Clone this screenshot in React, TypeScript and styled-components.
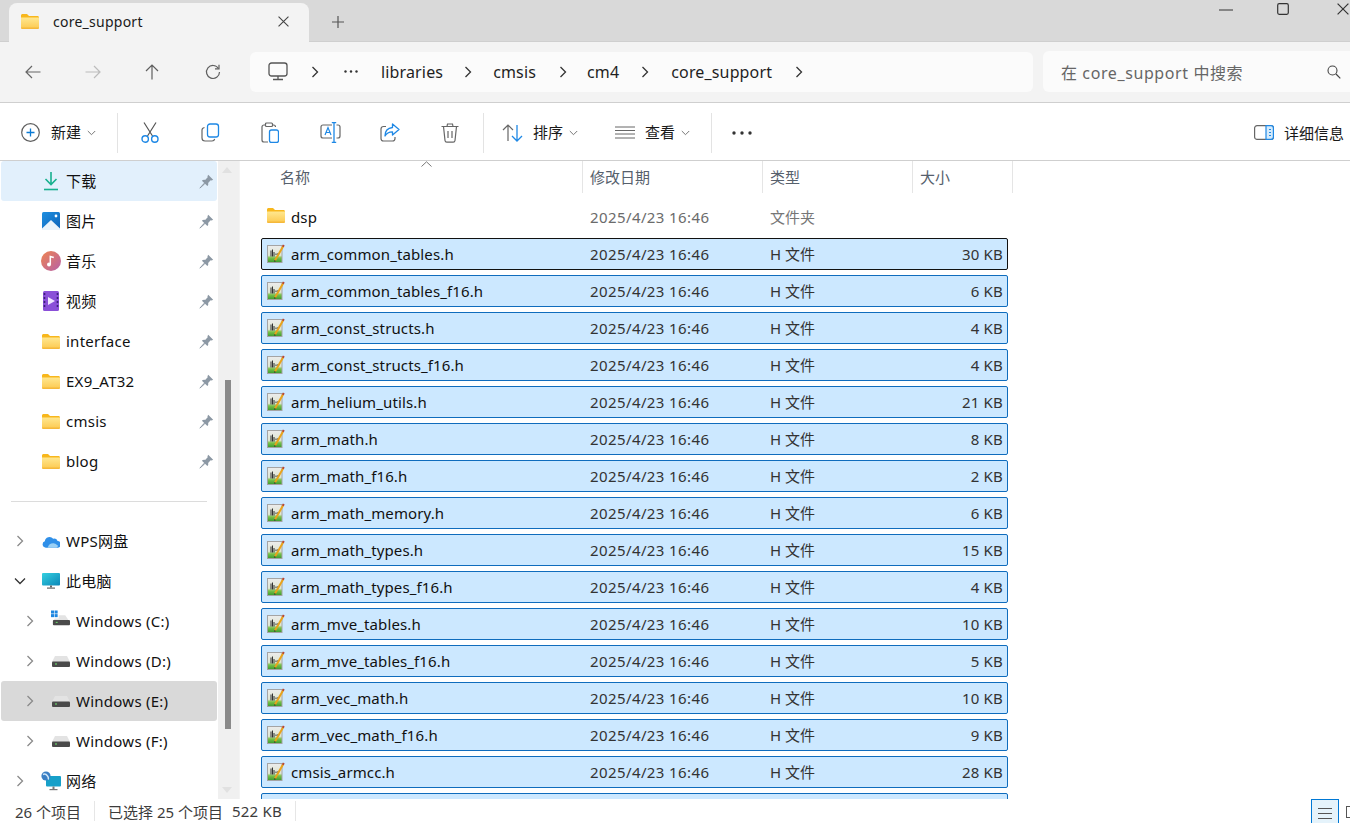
import React from "react";
import styled, { createGlobalStyle } from "styled-components";

const Global = createGlobalStyle`
  html, body { margin: 0; padding: 0; width: 1350px; height: 823px; overflow: hidden; background: #fff; }
  * { box-sizing: border-box; }
  body { font-family: "Noto Sans", "Noto Sans CJK SC", sans-serif; color: #1a1a1a; }
`;

const Page = styled.div`
  width: 1350px; height: 823px; display: flex; flex-direction: column; overflow: hidden;
`;
const TitleBar = styled.div`
  height: 42px; flex: none; background: #d9d9d9; border-bottom: 1px solid #cfcfcf;
  display: flex; align-items: flex-end; padding-left: 9px; position: relative;
`;
const Tab = styled.div`
  width: 300px; height: 39px; margin-bottom: -1px; background: #f3f3f3; border-radius: 8px 8px 0 0;
  display: flex; align-items: center; padding: 0 20px 2px 12px; font-size: 14px; letter-spacing: 0.25px;
`;
const TabTitle = styled.span`
  margin-left: 14px; flex: 1; color: #1a1a1a; line-height: 1;
`;
const NewTab = styled.div`
  margin-left: 23px; height: 38px; display: flex; align-items: center; color: #555;
`;
const WindowControls = styled.div`
  position: absolute; top: 3px; right: 1px; display: flex; align-items: flex-start;
`;
const WinSlot = styled.div<{ $gap?: number }>`
  margin-right: ${(p) => p.$gap ?? 0}px; display: flex;
`;
const NavBar = styled.div`
  height: 61px; flex: none; background: #f3f3f3; border-bottom: 1px solid #cfcfcf;
  display: flex; align-items: center; padding-left: 22px; padding-bottom: 1px;
`;
const NavBtn = styled.div`
  width: 60px; height: 24px; flex: none; display: flex; align-items: center; padding-left: 3px;
`;
const Address = styled.div`
  margin-left: -12px; width: 783px; height: 40px; background: #fbfbfb; border-radius: 6px;
  display: flex; align-items: center; padding-left: 18px; font-size: 16px; letter-spacing: 0.15px; color: #1f1f1f; flex: none;
`;
const Crumb = styled.span<{ $gap: number }>`
  margin-right: ${(p) => p.$gap}px; display: flex; align-items: center; line-height: 1; white-space: nowrap;
`;
const SearchBox = styled.div`
  margin-left: 10px; flex: 1; height: 41px; background: #fbfbfb; border-radius: 6px 0 0 6px;
  display: flex; align-items: center; justify-content: space-between; padding: 0 9px 0 18px;
  font-size: 16px; letter-spacing: 0.6px; color: #666;
`;
const CommandBar = styled.div`
  height: 58px; flex: none; background: #fff; border-bottom: 1px solid #cfcfcf; padding-top: 2px;
  display: flex; align-items: center; font-size: 15px; color: #1a1a1a;
`;
const NewButton = styled.div`
  width: 117px; flex: none; display: flex; align-items: center; padding-left: 21px;
`;
const CmdLabel = styled.span<{ $left: number }>`
  margin-left: ${(p) => p.$left}px; line-height: 1;
`;
const Caret = styled.span<{ $left: number }>`
  margin-left: ${(p) => p.$left}px; display: flex;
`;
const CmdSep = styled.div<{ $left?: number }>`
  width: 1px; height: 40px; background: #e3e3e3; flex: none; margin-left: ${(p) => p.$left ?? 0}px;
`;
const IconBtn = styled.div`
  width: 60px; flex: none; display: flex; justify-content: center; align-items: center;
`;
const IconRow = styled.div`
  display: flex; margin-left: 2px;
`;
const TextBtn = styled.div<{ $left: number }>`
  display: flex; align-items: center; margin-left: ${(p) => p.$left}px; flex: none;
`;
const Details = styled.div`
  margin-left: auto; padding-right: 6px; display: flex; align-items: center; gap: 10px;
`;
const Main = styled.div`
  flex: 1; min-height: 0; display: flex;
`;
const Sidebar = styled.div`
  width: 218px; flex: none; overflow: hidden; font-size: 15px; letter-spacing: 0.25px; padding-left: 1px;
`;
const NavRow = styled.div<{ $level: number; $tone?: "blue" | "gray" }>`
  height: 40px; width: 216px; display: flex; align-items: center; border-radius: 3px;
  padding-left: ${(p) => 10 + (p.$level - 1) * 10}px; padding-right: 3px;
  background: ${(p) => (p.$tone === "blue" ? "#e2f0fc" : p.$tone === "gray" ? "#d9d9d9" : "transparent")};
  color: #111;
`;
const ChevSlot = styled.div`
  width: 18px; flex: none; display: flex; justify-content: center; margin-right: 13px;
`;
const NavIcon = styled.div`
  width: 18px; height: 20px; flex: none; display: flex; align-items: center; justify-content: center;
`;
const NavText = styled.span`
  margin-left: 6px; flex: 1; white-space: nowrap; line-height: 1;
`;
const NavDivider = styled.div`
  height: 1px; background: #dcdcdc; margin: 20px 10px 19px 10px; width: 196px;
`;
const ScrollTrack = styled.div`
  width: 21px; flex: none; background: #f0f0f0; position: relative; display: flex; flex-direction: column; align-items: center;
`;
const ScrollArrow = styled.div<{ $down?: boolean }>`
  position: absolute; left: 4px; ${(p) => (p.$down ? "bottom: 6px;" : "top: 6px;")}
  width: 0; height: 0; border-left: 5px solid transparent; border-right: 5px solid transparent;
  ${(p) => (p.$down ? "border-top: 6px solid #e1e1e1;" : "border-bottom: 6px solid #e1e1e1;")}
`;
const ScrollThumb = styled.div`
  position: absolute; left: 7px; top: 219px; width: 6px; height: 349px; background: #8a8a8a;
`;
const FileArea = styled.div`
  flex: 1; min-width: 0; overflow: hidden; border-left: 1px solid #f4f4f4; position: relative; padding-left: 21px;
`;
const HeaderRow = styled.div`
  height: 32px; display: flex; font-size: 15px; color: #56606c; width: 752px;
`;
const HeaderCell = styled.div<{ $w: number; $first?: boolean }>`
  width: ${(p) => p.$w}px; flex: none; padding-left: ${(p) => (p.$first ? 19 : 7)}px;
  border-right: 1px solid #e5e5e5; display: flex; align-items: center; padding-bottom: 2px;
`;
const SortCaret = styled.div`
  position: absolute; left: 181px; top: 0; display: flex;
`;
const Rows = styled.div`
  padding-top: 8px; display: flex; flex-direction: column; gap: 5px;
`;
const FileRow = styled.div<{ $state?: "none" | "sel" | "focus" }>`
  width: 747px; height: 32px; flex: none; display: flex; align-items: center; border-radius: 2px; font-size: 15px;
  border: 1px solid ${(p) => (p.$state === "focus" ? "#111" : p.$state === "sel" ? "#0f6cbd" : "transparent")};
  background: ${(p) => (p.$state === "none" ? "transparent" : "#cce8ff")};
`;
const FileIcon = styled.div`
  width: 18px; height: 18px; margin-left: 5px; flex: none; display: flex;
`;
const FileName = styled.span`
  margin-left: 6px; width: 299px; flex: none; white-space: nowrap; color: #111; line-height: 1; letter-spacing: 0.12px;
`;
const FileDate = styled.span<{ $muted?: boolean }>`
  width: 180px; flex: none; color: ${(p) => (p.$muted ? "#6b6b6b" : "#333")}; line-height: 1; letter-spacing: 0.4px;
`;
const FileType = styled.span<{ $muted?: boolean }>`
  width: 90px; flex: none; color: ${(p) => (p.$muted ? "#767676" : "#333")}; line-height: 1;
`;
const FileSize = styled.span`
  flex: 1; text-align: right; padding-right: 4px; color: #333; line-height: 1; letter-spacing: 0.2px;
`;
const StatusBar = styled.div`
  height: 24px; flex: none; background: #fff; display: flex; align-items: center; font-size: 15px;
  color: #3c3c3c; padding-left: 15px; position: relative;
`;
const StatusSep = styled.div`
  width: 1px; height: 20px; background: #e6e6e6; margin: 0 13px 0 13px;
`;
const StatusSize = styled.span`
  margin-left: 9px; letter-spacing: 0.2px;
`;
const ViewToggle = styled.div`
  position: absolute; left: 1311px; top: 0; width: 28px; height: 30px;
  background: #e5f3fb; border: 1px solid #0078d4; display: flex; flex-direction: column; gap: 4px;
  padding: 8px 6px 0;
`;
const ToggleLine = styled.div`
  height: 1px; background: #555;
`;
const ToggleOther = styled.div`
  position: absolute; left: 1346px; top: 7px; width: 10px; height: 12px; border: 1px solid #555;
`;

/* ---------- icons ---------- */
const Folder = () => (
  <svg width="18" height="15" viewBox="0 0 18 15">
    <defs>
      <linearGradient id="fg" x1="0" y1="0" x2="0" y2="1">
        <stop offset="0" stopColor="#ffe78f" />
        <stop offset="1" stopColor="#fcc94f" />
      </linearGradient>
    </defs>
    <path d="M0 1.500C0 .7.7 0 1.500 0H6l2 2h8.500c.8 0 1.500.7 1.500 1.500V5H0z" fill="#f8b71c" />
    <path d="M0 3.500h18V13.500c0 .8-.7 1.500-1.500 1.500h-15C.7 15 0 14.300 0 13.500z" fill="url(#fg)" />
    <path d="M0 13.500h18v.3c0 .7-.5 1.200-1.200 1.200H1.200C.5 15 0 14.500 0 13.800z" fill="#f5b83a" />
  </svg>
);
const HFile = () => (
  <svg width="18" height="19" viewBox="0 0 18 19" style={{ marginTop: -1 }}>
    <defs>
      <linearGradient id="hg" x1="0" y1="0" x2="0" y2="1">
        <stop offset="0" stopColor="#ececec" />
        <stop offset="0.58" stopColor="#dfe6d2" />
        <stop offset="0.72" stopColor="#7cc24c" />
        <stop offset="1" stopColor="#379a2b" />
      </linearGradient>
    </defs>
    <rect x="0.500" y="1.500" width="14.500" height="17" fill="url(#hg)" stroke="#a4a4a4" />
    <path d="M4 6.500v6M5.500 5.500v7M7 8v4.500M9 9.500v1.500M10.500 9.500v1" stroke="#333" strokeWidth="1" />
    <path d="M8 16.500 16.300 2" stroke="#e8a31c" strokeWidth="2" />
    <path d="M15.800 2.800 16.800 1" stroke="#b5473a" strokeWidth="2" />
    <path d="M7.200 18l.3-2 1.500.9z" fill="#333" />
  </svg>
);
const Pin = () => (
  <svg width="15" height="15" viewBox="0 0 14 14">
    <path d="M8.600.800 13.200 5.400 11.800 6.100 10.900 5.800 8.500 8.300C8.900 9.700 8.500 10.600 7.800 11.300L2.700 6.200C3.400 5.500 4.500 5.100 5.700 5.500L8.100 3.100 7.900 2.200z" fill="#8c98a4" />
    <path d="M4.800 8.700.800 13.200 5.300 9.200z" fill="#8c98a4" stroke="#8c98a4" strokeWidth=".8" />
  </svg>
);
const Chev = ({ color = "#8a8a8a" }: { color?: string }) => (
  <svg width="8" height="12" viewBox="0 0 8 12">
    <path d="M1.500 1 6.500 6 1.500 11" fill="none" stroke={color} strokeWidth="1.300" />
  </svg>
);
const ChevDown = () => (
  <svg width="12" height="8" viewBox="0 0 12 8">
    <path d="M1 1.500 6 6.500 11 1.500" fill="none" stroke="#333" strokeWidth="1.300" />
  </svg>
);
const SmallCaret = () => (
  <svg width="9" height="6" viewBox="0 0 9 6">
    <path d="M.8 1 4.500 4.700 8.200 1" fill="none" stroke="#777" strokeWidth="1" />
  </svg>
);
const Drive = () => (
  <svg width="18" height="11" viewBox="0 0 18 11">
    <path d="M3 0h12l3 6H0z" fill="#e3e3e3" />
    <rect x="0" y="5.500" width="18" height="5.500" rx="1" fill="#4a4a4a" />
    <rect x="3" y="7.500" width="2" height="1" fill="#6fe36f" />
  </svg>
);
const DriveC = () => (
  <svg width="20" height="20" viewBox="0 0 20 20" style={{ marginLeft: -1, marginTop: -2 }}>
    <rect x="0" y="0" width="3.200" height="3.200" fill="#1d86e0" />
    <rect x="3.800" y="0" width="3.200" height="3.200" fill="#1d86e0" />
    <rect x="0" y="3.800" width="3.200" height="3.200" fill="#1d86e0" />
    <rect x="3.800" y="3.800" width="3.200" height="3.200" fill="#1d86e0" />
    <path d="M8 5h7l4 6H2l2-2.500H8z" fill="#e3e3e3" />
    <rect x="2" y="10" width="18" height="5.500" rx="1" fill="#4a4a4a" />
    <rect x="5" y="12" width="2" height="1" fill="#6fe36f" />
  </svg>
);
const Download = () => (
  <svg width="16" height="20" viewBox="0 0 16 20">
    <path d="M8 1v12M2.500 8 8 13.500 13.500 8" fill="none" stroke="#17b08e" strokeWidth="1.600" />
    <path d="M1 18.500h14" stroke="#17b08e" strokeWidth="1.600" />
  </svg>
);
const Pictures = () => (
  <svg width="18" height="18" viewBox="0 0 18 18">
    <defs>
      <linearGradient id="pg" x1="0" y1="0" x2="1" y2="1">
        <stop offset="0" stopColor="#1e8fe0" />
        <stop offset="1" stopColor="#0d63b8" />
      </linearGradient>
    </defs>
    <rect width="18" height="18" rx="1.500" fill="url(#pg)" />
    <circle cx="14" cy="4" r="1.400" fill="#fff" />
    <path d="M0 16.500 9 8l9 8.500V18H0z" fill="#eaf4fb" />
  </svg>
);
const Music = () => (
  <svg width="20" height="20" viewBox="0 0 20 20" style={{ margin: -1 }}>
    <defs>
      <linearGradient id="mg" x1="0" y1="0" x2="1" y2="1">
        <stop offset="0" stopColor="#ef8450" />
        <stop offset="1" stopColor="#b660a8" />
      </linearGradient>
    </defs>
    <circle cx="10" cy="10" r="10" fill="url(#mg)" />
    <circle cx="8" cy="13.500" r="2" fill="#fff" />
    <path d="M9.300 13.500V5.500l3.500 1" fill="none" stroke="#fff" strokeWidth="1.500" />
  </svg>
);
const Video = () => (
  <svg width="16" height="20" viewBox="0 0 16 20">
    <rect width="16" height="20" rx="1.500" fill="#8a4fd8" />
    <path d="M5 6v8l7-4z" fill="#efe6ff" />
    <path d="M1.500 2v16M14.500 2v16" stroke="#3b1f7a" strokeWidth="1.600" strokeDasharray="2 2" />
  </svg>
);
const Cloud = () => (
  <svg width="19" height="13" viewBox="0 0 19 13">
    <path d="M4 13a3.500 3.500 0 0 1-1-6.800A5 5 0 0 1 11.800 3.500 4.200 4.200 0 0 1 16.500 6 3.500 3.500 0 0 1 16 13z" fill="#2f8fe8" />
    <path d="M6 13c1-3.500 3.500-5 7-4.500 1.500.3 3 1.500 4 2.500-.5 1.200-1 2-2 2z" fill="#9ad0f5" />
  </svg>
);
const Monitor = () => (
  <svg width="18" height="16" viewBox="0 0 18 16">
    <defs>
      <linearGradient id="cg" x1="0" y1="0" x2="1" y2="1">
        <stop offset="0" stopColor="#34d0e0" />
        <stop offset="1" stopColor="#0c87b8" />
      </linearGradient>
    </defs>
    <rect width="18" height="12.500" rx="1" fill="url(#cg)" />
    <rect x="8" y="12.500" width="2" height="2" fill="#666" />
    <rect x="5" y="14.500" width="8" height="1.200" fill="#666" />
  </svg>
);
const Network = () => (
  <svg width="20" height="20" viewBox="0 0 20 20" style={{ margin: -1 }}>
    <rect x="5" y="5" width="15" height="10.500" rx="1" fill="#17a0c9" />
    <rect x="11.500" y="15.500" width="2" height="2.500" fill="#777" />
    <rect x="8.500" y="18" width="8" height="1.200" fill="#777" />
    <circle cx="5" cy="5" r="4.600" fill="#3b7fc4" />
    <path d="M2 3.500c2-1 3.500 0 4.500 1.500S8 7.500 7 8.500" stroke="#cfe6f7" strokeWidth="1.400" fill="none" />
  </svg>
);
const Gray = "#5f5f5f";
const Blue = "#1e88e5";
const Back = ({ c }: { c: string }) => (
  <svg width="16" height="14" viewBox="0 0 16 14">
    <path d="M15.500 7H1M7 1 1 7l6 6" fill="none" stroke={c} strokeWidth="1.200" />
  </svg>
);
const Forward = ({ c }: { c: string }) => (
  <svg width="16" height="14" viewBox="0 0 16 14">
    <path d="M.5 7H15M9 1l6 6-6 6" fill="none" stroke={c} strokeWidth="1.200" />
  </svg>
);
const Up = () => (
  <svg width="14" height="16" viewBox="0 0 14 16">
    <path d="M7 15.500V1M1 7l6-6 6 6" fill="none" stroke={Gray} strokeWidth="1.200" />
  </svg>
);
const Refresh = () => (
  <svg width="16" height="16" viewBox="0 0 16 16">
    <path d="M13.500 4.500A6.500 6.500 0 1 0 14.500 8" fill="none" stroke={Gray} strokeWidth="1.200" />
    <path d="M14 .8v4h-4" fill="none" stroke={Gray} strokeWidth="1.200" />
  </svg>
);
const Pc = () => (
  <svg width="20" height="19" viewBox="0 0 20 19">
    <rect x="1" y="1" width="18" height="13" rx="2.500" fill="none" stroke="#555" strokeWidth="1.300" />
    <path d="M10 14v3M5 17.500h10" stroke="#555" strokeWidth="1.300" />
  </svg>
);
const Plus = () => (
  <svg width="12" height="12" viewBox="0 0 12 12">
    <path d="M6 0v12M0 6h12" stroke="#555" strokeWidth="1.200" />
  </svg>
);
const Close = ({ s = 10, c = "#444" }: { s?: number; c?: string }) => (
  <svg width={s} height={s} viewBox="0 0 10 10">
    <path d="M.5.500l9 9M9.500.500l-9 9" stroke={c} strokeWidth="1" />
  </svg>
);
const Search = () => (
  <svg width="14" height="14" viewBox="0 0 14 14">
    <circle cx="5.500" cy="5.500" r="4.500" fill="none" stroke="#444" strokeWidth="1.100" />
    <path d="M9 9l4.300 4.300" stroke="#444" strokeWidth="1.200" />
  </svg>
);
const AddCircle = () => (
  <svg width="19" height="19" viewBox="0 0 19 19">
    <circle cx="9.500" cy="9.500" r="8.800" fill="none" stroke="#5f5f5f" strokeWidth="1.200" />
    <path d="M9.500 5.500v8M5.500 9.500h8" stroke="#0a7ad4" strokeWidth="1.300" />
  </svg>
);
const Scissors = () => (
  <svg width="18" height="21" viewBox="0 0 18 21">
    <path d="M3 .5 11.500 14M15 .5 6.500 14" stroke="#555" strokeWidth="1.200" fill="none" />
    <circle cx="4.200" cy="17" r="3.200" fill="none" stroke={Blue} strokeWidth="1.400" />
    <circle cx="13.800" cy="17" r="3.200" fill="none" stroke={Blue} strokeWidth="1.400" />
  </svg>
);
const Copy = () => (
  <svg width="19" height="19" viewBox="0 0 19 19">
    <path d="M3.500 4.500C1.800 4.800 1 5.800 1 7v8c0 1.700 1.300 3 3 3h7c1.300 0 2.400-.8 2.700-2" fill="none" stroke="#666" strokeWidth="1.200" />
    <rect x="6.500" y="1" width="11" height="13" rx="2.500" fill="none" stroke={Blue} strokeWidth="1.300" />
  </svg>
);
const Paste = () => (
  <svg width="18" height="21" viewBox="0 0 18 21">
    <path d="M4.500 3H3C1.800 3 1 3.800 1 5v13c0 1.200.8 2 2 2h4" fill="none" stroke="#666" strokeWidth="1.200" />
    <path d="M11 3h1.500c1 0 2 .8 2 2" fill="none" stroke="#666" strokeWidth="1.200" />
    <rect x="4.500" y="1" width="7" height="3.500" rx="1" fill="none" stroke="#666" strokeWidth="1.200" />
    <rect x="8.500" y="8" width="9" height="12.500" rx="2" fill="none" stroke={Blue} strokeWidth="1.300" />
  </svg>
);
const Rename = () => (
  <svg width="21" height="21" viewBox="0 0 21 21">
    <path d="M12 3H3C1.700 3 1 3.800 1 5v9c0 1.300.7 2 2 2h9" fill="none" stroke="#666" strokeWidth="1.200" />
    <path d="M16.500 3h1.500c1.300 0 2 .8 2 2v9c0 1.300-.7 2-2 2h-1.500" fill="none" stroke="#666" strokeWidth="1.200" />
    <path d="M5 13 8 5.500 11 13M6 10.500h4" fill="none" stroke={Blue} strokeWidth="1.200" />
    <path d="M14 .6v19.800M11.800.6h4.400M11.800 20.400h4.400" fill="none" stroke={Blue} strokeWidth="1.300" />
  </svg>
);
const Share = () => (
  <svg width="20" height="19" viewBox="0 0 20 19">
    <path d="M6 3.500H3.500C2 3.500 1 4.500 1 6v9.500C1 17 2 18 3.500 18h9c1.500 0 2.500-1 2.500-2.500V14" fill="none" stroke="#666" strokeWidth="1.200" />
    <path d="M12.500 1 19 6.500 12.500 12V8.800C9 8.800 6.500 10 5 13c0-4.500 2.500-8 7.500-8.500z" fill="none" stroke={Blue} strokeWidth="1.300" strokeLinejoin="round" />
  </svg>
);
const Trash = () => (
  <svg width="18" height="20" viewBox="0 0 18 20">
    <path d="M.5 3.500h17M6 3.500 6.500 1h5l.5 2.500" fill="none" stroke="#666" strokeWidth="1.200" />
    <path d="M2.500 3.500 4 17.500c.1 1 .8 1.700 1.800 1.700h6.400c1 0 1.700-.7 1.800-1.700l1.500-14" fill="none" stroke="#666" strokeWidth="1.200" />
    <path d="M7 8v7M11 8v7" stroke="#666" strokeWidth="1.200" />
  </svg>
);
const Sort = () => (
  <svg width="21" height="18" viewBox="0 0 21 18">
    <path d="M6 17V1M1 6l5-5 5 5" fill="none" stroke="#666" strokeWidth="1.200" />
    <path d="M15 1v16M10 12l5 5 5-5" fill="none" stroke={Blue} strokeWidth="1.300" />
  </svg>
);
const ViewLines = () => (
  <svg width="20" height="13" viewBox="0 0 20 13">
    <path d="M0 1h20M0 4.500h20M0 8h20M0 12h20" stroke="#666" strokeWidth="1" />
  </svg>
);
const More = () => (
  <svg width="20" height="4" viewBox="0 0 20 4">
    <circle cx="2" cy="2" r="1.700" fill="#333" />
    <circle cx="10" cy="2" r="1.700" fill="#333" />
    <circle cx="18" cy="2" r="1.700" fill="#333" />
  </svg>
);
const Dots = () => (
  <svg width="14" height="3" viewBox="0 0 14 3">
    <circle cx="1.500" cy="1.500" r="1.200" fill="#333" />
    <circle cx="7" cy="1.500" r="1.200" fill="#333" />
    <circle cx="12.500" cy="1.500" r="1.200" fill="#333" />
  </svg>
);
const Panel = () => (
  <svg width="20" height="15" viewBox="0 0 20 15">
    <rect x=".6" y=".6" width="18.800" height="13.800" rx="2.500" fill="none" stroke="#666" strokeWidth="1.200" />
    <path d="M12 .6h5c1.400 0 2.400 1 2.400 2.400v9c0 1.400-1 2.400-2.400 2.400h-5z" fill="#d6ebfb" stroke={Blue} strokeWidth="1.200" />
    <path d="M15 4.500h2M15 7.500h2M15 10.500h2" stroke={Blue} />
  </svg>
);
const HeaderCaret = () => (
  <svg width="11" height="6" viewBox="0 0 11 6">
    <path d="M.5 5.500 5.500.8l5 4.700" fill="none" stroke="#777" strokeWidth="1" />
  </svg>
);
const Minimize = () => <svg width="14" height="2" viewBox="0 0 14 2" style={{ marginTop: 6 }}><path d="M0 1h14" stroke="#333" /></svg>;
const Maximize = () => (
  <svg width="12" height="12" viewBox="0 0 12 12">
    <rect x=".7" y=".7" width="10.600" height="10.600" rx="1.500" fill="none" stroke="#333" strokeWidth="1.200" />
  </svg>
);

/* ---------- data ---------- */
type NavItem = { label: string; icon: React.ReactNode; level: number; pin?: boolean; chev?: "r" | "d"; tone?: "blue" | "gray" };
const pinned: NavItem[] = [
  { label: "下载", icon: <Download />, level: 1, pin: true, tone: "blue" },
  { label: "图片", icon: <Pictures />, level: 1, pin: true },
  { label: "音乐", icon: <Music />, level: 1, pin: true },
  { label: "视频", icon: <Video />, level: 1, pin: true },
  { label: "interface", icon: <Folder />, level: 1, pin: true },
  { label: "EX9_AT32", icon: <Folder />, level: 1, pin: true },
  { label: "cmsis", icon: <Folder />, level: 1, pin: true },
  { label: "blog", icon: <Folder />, level: 1, pin: true },
];
const tree: NavItem[] = [
  { label: "WPS网盘", icon: <Cloud />, level: 1, chev: "r" },
  { label: "此电脑", icon: <Monitor />, level: 1, chev: "d" },
  { label: "Windows (C:)", icon: <DriveC />, level: 2, chev: "r" },
  { label: "Windows (D:)", icon: <Drive />, level: 2, chev: "r" },
  { label: "Windows (E:)", icon: <Drive />, level: 2, chev: "r", tone: "gray" },
  { label: "Windows (F:)", icon: <Drive />, level: 2, chev: "r" },
  { label: "网络", icon: <Network />, level: 1, chev: "r" },
];
const files: [string, string][] = [
  ["arm_common_tables.h", "30 KB"],
  ["arm_common_tables_f16.h", "6 KB"],
  ["arm_const_structs.h", "4 KB"],
  ["arm_const_structs_f16.h", "4 KB"],
  ["arm_helium_utils.h", "21 KB"],
  ["arm_math.h", "8 KB"],
  ["arm_math_f16.h", "2 KB"],
  ["arm_math_memory.h", "6 KB"],
  ["arm_math_types.h", "15 KB"],
  ["arm_math_types_f16.h", "4 KB"],
  ["arm_mve_tables.h", "10 KB"],
  ["arm_mve_tables_f16.h", "5 KB"],
  ["arm_vec_math.h", "10 KB"],
  ["arm_vec_math_f16.h", "9 KB"],
  ["cmsis_armcc.h", "28 KB"],
];

const NavEntry = ({ item }: { item: NavItem }) => (
  <NavRow $level={item.level} $tone={item.tone}>
    <ChevSlot>{item.chev === "r" ? <Chev /> : item.chev === "d" ? <ChevDown /> : null}</ChevSlot>
    <NavIcon>{item.icon}</NavIcon>
    <NavText>{item.label}</NavText>
    {item.pin ? <Pin /> : null}
  </NavRow>
);

export default function App() {
  return (
    <Page>
      <Global />
      <TitleBar>
        <Tab>
          <Folder />
          <TabTitle>core_support</TabTitle>
          <Close s={11} />
        </Tab>
        <NewTab><Plus /></NewTab>
        <WindowControls>
          <WinSlot $gap={44}><Minimize /></WinSlot>
          <WinSlot $gap={48}><Maximize /></WinSlot>
          <WinSlot><Close s={12} c="#333" /></WinSlot>
        </WindowControls>
      </TitleBar>
      <NavBar>
        <NavBtn><Back c="#666" /></NavBtn>
        <NavBtn><Forward c="#bcbcbc" /></NavBtn>
        <NavBtn><Up /></NavBtn>
        <NavBtn><Refresh /></NavBtn>
        <Address>
          <Crumb $gap={23}><Pc /></Crumb>
          <Crumb $gap={25}><Chev color="#333" /></Crumb>
          <Crumb $gap={23}><Dots /></Crumb>
          <Crumb $gap={21}><span>libraries</span></Crumb>
          <Crumb $gap={21}><Chev color="#333" /></Crumb>
          <Crumb $gap={23}><span>cmsis</span></Crumb>
          <Crumb $gap={20}><Chev color="#333" /></Crumb>
          <Crumb $gap={22}><span>cm4</span></Crumb>
          <Crumb $gap={22}><Chev color="#333" /></Crumb>
          <Crumb $gap={23}><span>core_support</span></Crumb>
          <Crumb $gap={0}><Chev color="#333" /></Crumb>
        </Address>
        <SearchBox>
          <span>在 core_support 中搜索</span>
          <Search />
        </SearchBox>
      </NavBar>
      <CommandBar>
        <NewButton>
          <AddCircle />
          <CmdLabel $left={11}>新建</CmdLabel>
          <Caret $left={6}><SmallCaret /></Caret>
        </NewButton>
        <CmdSep />
        <IconRow>
          <IconBtn><Scissors /></IconBtn>
          <IconBtn><Copy /></IconBtn>
          <IconBtn><Paste /></IconBtn>
          <IconBtn><Rename /></IconBtn>
          <IconBtn><Share /></IconBtn>
          <IconBtn><Trash /></IconBtn>
        </IconRow>
        <CmdSep $left={3} />
        <TextBtn $left={18}>
          <Sort />
          <CmdLabel $left={10}>排序</CmdLabel>
          <Caret $left={6}><SmallCaret /></Caret>
        </TextBtn>
        <TextBtn $left={37}>
          <ViewLines />
          <CmdLabel $left={10}>查看</CmdLabel>
          <Caret $left={6}><SmallCaret /></Caret>
        </TextBtn>
        <CmdSep $left={21} />
        <TextBtn $left={20}><More /></TextBtn>
        <Details>
          <Panel />
          <span>详细信息</span>
        </Details>
      </CommandBar>
      <Main>
        <Sidebar>
          {pinned.map((n) => <NavEntry key={n.label} item={n} />)}
          <NavDivider />
          {tree.map((n) => <NavEntry key={n.label} item={n} />)}
        </Sidebar>
        <ScrollTrack>
          <ScrollArrow />
          <ScrollThumb />
          <ScrollArrow $down />
        </ScrollTrack>
        <FileArea>
          <HeaderRow>
            <HeaderCell $w={322} $first>名称</HeaderCell>
            <HeaderCell $w={180}>修改日期</HeaderCell>
            <HeaderCell $w={150}>类型</HeaderCell>
            <HeaderCell $w={100}>大小</HeaderCell>
          </HeaderRow>
          <SortCaret><HeaderCaret /></SortCaret>
          <Rows>
            <FileRow $state="none">
              <FileIcon><Folder /></FileIcon>
              <FileName>dsp</FileName>
              <FileDate $muted>2025/4/23 16:46</FileDate>
              <FileType $muted>文件夹</FileType>
            </FileRow>
            {files.map(([name, size], i) => (
              <FileRow key={name} $state={i === 0 ? "focus" : "sel"}>
                <FileIcon><HFile /></FileIcon>
                <FileName>{name}</FileName>
                <FileDate>2025/4/23 16:46</FileDate>
                <FileType>H 文件</FileType>
                <FileSize>{size}</FileSize>
              </FileRow>
            ))}
            <FileRow $state="sel">
              <FileIcon><HFile /></FileIcon>
            </FileRow>
          </Rows>
        </FileArea>
      </Main>
      <StatusBar>
        <span>26 个项目</span>
        <StatusSep />
        <span>已选择 25 个项目</span>
        <StatusSize>522 KB</StatusSize>
        <StatusSep />
        <ViewToggle>
          <ToggleLine /><ToggleLine /><ToggleLine /><ToggleLine />
        </ViewToggle>
        <ToggleOther />
      </StatusBar>
    </Page>
  );
}
